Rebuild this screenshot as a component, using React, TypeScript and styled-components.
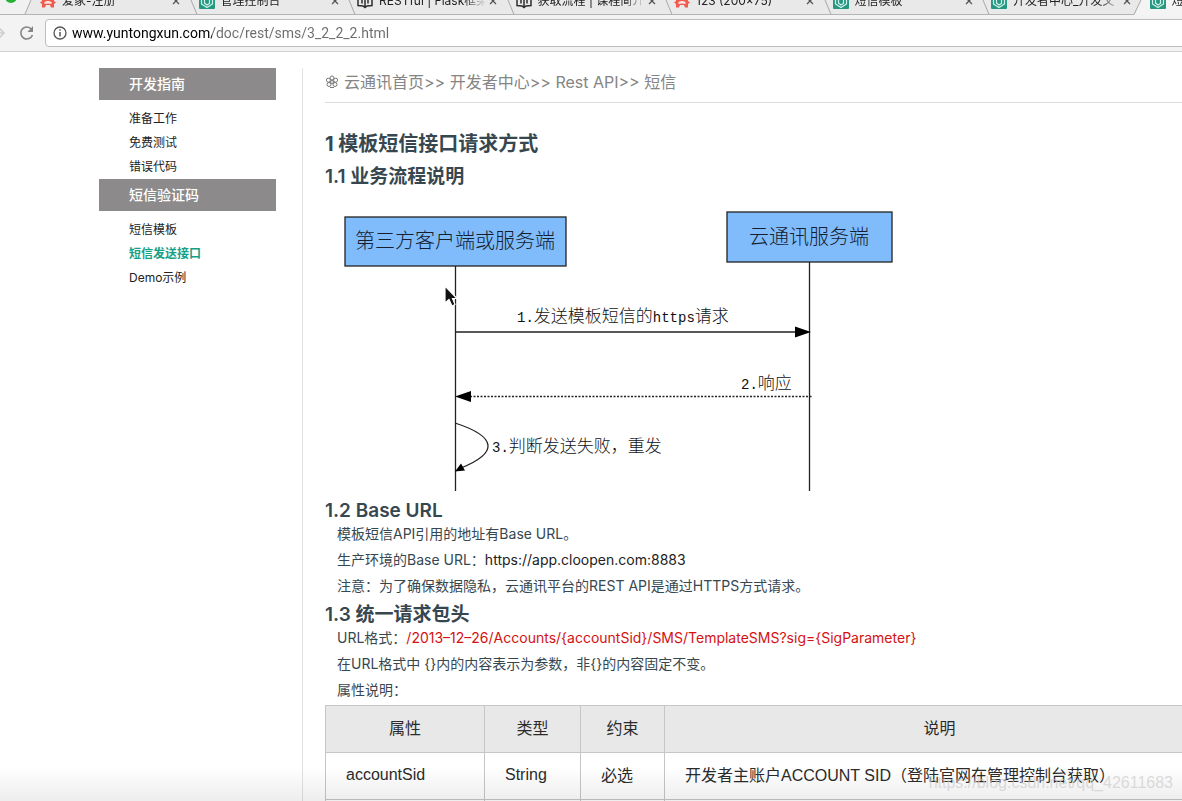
import React from "react";
import styled, { createGlobalStyle } from "styled-components";

const ui = `Inter, "Noto Sans CJK SC", sans-serif`;
const ink = "#37474f";

const GlobalStyle = createGlobalStyle`
  * { box-sizing: border-box; }
  body { margin: 0; background: #fff; font-family: ${ui}; }
  a { color: inherit; text-decoration: none; }
  h1, h2, h3, p, ul, ol { margin: 0; padding: 0; }
  ul, ol { list-style: none; }
`;

const Window = styled.div`
  position: relative;
  height: 100vh;
  overflow: hidden;
  display: flex;
  flex-direction: column;
`;

const TabStrip = styled.nav`
  display: flex;
  align-items: flex-end;
  flex: none;
  height: 15px;
  overflow: hidden;
  background: #e9e9e9;
`;

const WindowControls = styled.div`
  flex: none;
  width: 38px;
  height: 15px;
  border-bottom: 1px solid #b4b4b4;
  background: #f1f1f1;
  svg { display: block; }
`;

const TabRow = styled.div`
  flex: none;
  display: flex;
  width: 1268px;
`;

const Tab = styled.div<{ $active?: boolean }>`
  position: relative;
  flex: 1 1 0;
  min-width: 0;
  height: 27px;
  display: flex;
  align-items: center;
  padding-left: 2px;
  background: ${(p) => (p.$active ? "#f4f4f4" : "#e9e9e9")};
  border-bottom: 1px solid ${(p) => (p.$active ? "#f4f4f4" : "#b4b4b4")};
`;

const TabEdge = styled.svg`
  position: absolute;
  left: -7px;
  bottom: -1px;
`;

const Favicon = styled.svg`
  flex: none;
  width: 16px;
  height: 16px;
  margin-right: 6px;
`;

const TabTitle = styled.a`
  flex: none;
  width: 107px;
  overflow: hidden;
  white-space: nowrap;
  font-size: 12px;
  line-height: 20px;
  color: #222;
  mask-image: linear-gradient(90deg, #000 80%, transparent);
`;

const CloseButton = styled.button`
  display: flex;
  padding: 0;
  border: 0;
  margin-left: 3px;
  background: none;
`;

const Toolbar = styled.header`
  flex: none;
  display: flex;
  align-items: center;
  height: 37px;
  padding-bottom: 1px;
  background: #f3f3f3;
  border-bottom: 1px solid #d2d2d2;
`;

const ToolButton = styled.button<{ $width: number }>`
  display: flex;
  justify-content: center;
  flex: none;
  width: ${(p) => p.$width}px;
  padding: 0;
  border: 0;
  background: none;
`;

const AddressBox = styled.label`
  flex: 1;
  display: flex;
  align-items: center;
  gap: 5px;
  height: 28px;
  margin-right: -8px;
  margin-left: 4px;
  padding-left: 7px;
  background: #fff;
  border: 1px solid #bdbdbd;
  border-radius: 4px;
`;

const Address = styled.input`
  flex: 1;
  min-width: 0;
  padding: 0;
  border: 0;
  outline: 0;
  font: 14px/20px Roboto, sans-serif;
  color: transparent;
  background: linear-gradient(90deg, #000 140px, #6b6b6b 140px);
  background-clip: text;
`;

const Page = styled.div`
  flex: 1;
  min-height: 0;
  display: flex;
  align-items: stretch;
  padding: 16px 0 0 99px;
`;

const Sidebar = styled.aside`
  flex: none;
  width: 177px;
`;

const SideHeading = styled.h2`
  height: 32px;
  padding-left: 30px;
  font-size: 14px;
  font-weight: 500;
  line-height: 32px;
  color: #fff;
  background: #8c8a8a;
`;

const SideList = styled.ul`
  padding: 7px 0 0 30px;
`;

const SideItem = styled.li<{ $current?: boolean }>`
  font-size: 12px;
  line-height: 24px;
  font-weight: ${(p) => (p.$current ? 700 : 400)};
  color: ${(p) => (p.$current ? "#15a086" : "#222")};
`;

const Content = styled.main`
  flex: none;
  width: 914px;
  margin-left: 26px;
  padding-left: 22px;
  border-left: 1px solid #e2e2e2;
`;

const Breadcrumb = styled.div`
  display: flex;
  gap: 5px;
  height: 35px;
  font-size: 16px;
  line-height: 28px;
  color: #858585;
  border-bottom: 1px solid #dcdcdc;
  svg { margin-top: 7px; }
`;

const Title = styled.h1`
  margin-top: 30px;
  font-size: 20px;
  line-height: 22px;
  font-weight: 700;
  color: ${ink};
`;

const Section = styled.h2<{ $gap: number }>`
  margin-top: ${(p) => p.$gap}px;
  font-size: 19px;
  line-height: 20px;
  font-weight: 600;
  color: ${ink};
`;

const Text = styled.p`
  padding-left: 12px;
  font-size: 14px;
  line-height: 26px;
  color: ${ink};
`;

const PlainUrl = styled.a`
  color: #222;
`;

const Path = styled.span`
  color: #d41212;
`;

const Diagram = styled.svg`
  display: block;
  width: 590px;
  height: 308px;
  font-family: "Liberation Mono", "Noto Sans CJK SC", monospace;
  font-size: 17px;
  font-weight: 300;
`;

const Table = styled.table`
  width: 890px;
  margin-top: 2px;
  border-collapse: collapse;
  table-layout: fixed;
  font-family: "Liberation Sans", "Noto Sans CJK SC", sans-serif;
  font-size: 16px;
  line-height: 24px;
  color: #2b2b2b;
`;

const HeadCell = styled.th<{ $width?: number }>`
  width: ${(p) => (p.$width ? `${p.$width}px` : "auto")};
  height: 47px;
  padding: 0;
  font-weight: 400;
  background: #e8e8e8;
  border: 1px solid #c6c6c6;
`;

const Cell = styled.td<{ $latin?: boolean }>`
  height: 47px;
  padding: 0 20px ${(p) => (p.$latin ? 3 : 0)}px;
  white-space: nowrap;
  border: 1px solid #c6c6c6;
`;

const BottomShade = styled.div`
  position: absolute;
  inset: auto 0 0 0;
  height: 34px;
  background: linear-gradient(rgba(0, 0, 0, 0), rgba(0, 0, 0, 0.07));
  pointer-events: none;
`;

const Watermark = styled.div`
  position: absolute;
  right: 9px;
  bottom: 8px;
  font: 16px/20px "Liberation Sans", sans-serif;
  color: rgba(200, 200, 200, 0.65);
  pointer-events: none;
`;

const Cursor = styled.svg`
  position: absolute;
  left: 443px;
  top: 284px;
`;

type IconKind = "robot" | "leaf" | "book";

const TabIcon = ({ kind }: { kind: IconKind }) => {
  if (kind === "robot")
    return (
      <Favicon viewBox="0 0 16 16" aria-hidden>
        <path d="M2 8C2 4 4 2 8 2s6 2 6 6l2 1.500-2 1.500v3.500h-3l-1-2.500H6l-1 2.500H2V11L0 9.500Z" fill="#f05a4f" />
        <path d="M4.500 9q3.500-2 7 0v2q-3.500-1-7 0Z" fill="#fbe6e3" />
      </Favicon>
    );
  if (kind === "leaf")
    return (
      <Favicon viewBox="0 0 16 16" aria-hidden>
        <rect width="16" height="16" rx="1" fill="#249880" />
        <path d="M2.500 4v7l5.500 3.500 5.500-3.500V4M5.500 5v5L8 12l2.500-1.500V5" fill="none" stroke="#d5f2ea" strokeWidth="1.200" />
      </Favicon>
    );
  return (
    <Favicon viewBox="0 0 16 16" aria-hidden>
      <path d="M1 3v9.500l5 .5 2 1.500 2-1.500 5-.5V3l-5-.5L8 4 6 2.500ZM8 4v9.500M5 3v7.500M11 3v7.500" fill="none" stroke="#2c2c2c" strokeWidth="1.500" />
    </Favicon>
  );
};

const tabs: { icon: IconKind; title: string }[] = [
  { icon: "robot", title: "爱家-注册" },
  { icon: "leaf", title: "管理控制台" },
  { icon: "book", title: "RESTful | Flask框架" },
  { icon: "book", title: "获取流程 | 课程简介" },
  { icon: "robot", title: "123 (200×75)" },
  { icon: "leaf", title: "短信模板" },
  { icon: "leaf", title: "开发者中心_开发文" },
  { icon: "leaf", title: "短信" },
];

const menus = [
  { heading: "开发指南", items: ["准备工作", "免费测试", "错误代码"] },
  { heading: "短信验证码", items: ["短信模板", "短信发送接口", "Demo示例"] },
];

const BrowserTabs = () => (
  <TabStrip>
    <WindowControls>
      <svg width="38" height="14">
        <circle cx="11" cy="-3" r="6" fill="#27b136" />
        <path d="M25 14 31 0H39V14Z" fill="#e9e9e9" />
        <path d="M25 14 31 0" stroke="#a8a8a8" fill="none" />
      </svg>
    </WindowControls>
    <TabRow>
      {tabs.map((tab, i) => {
        const active = i === tabs.length - 1;
        return (
          <Tab key={i} $active={active}>
            {active ? (
              <TabEdge width="8" height="15" overflow="visible">
                <path d="M-7 15 0 0H8V15Z" fill="#f4f4f4" />
                <path d="M-7 14.500 0 0" stroke="#a8a8a8" />
              </TabEdge>
            ) : (
              i > 0 && (
                <TabEdge width="8" height="15">
                  <path d="M1 0 7 14.500" stroke="#a8a8a8" />
                </TabEdge>
              )
            )}
            <TabIcon kind={tab.icon} />
            <TabTitle href="#">{tab.title}</TabTitle>
            {!active && (
              <CloseButton aria-label="Close tab">
                <svg width="8" height="8">
                  <path d="m1 1 6 6m0-6-6 6" stroke="#555" strokeWidth="1.300" />
                </svg>
              </CloseButton>
            )}
          </Tab>
        );
      })}
    </TabRow>
  </TabStrip>
);

const BrowserToolbar = () => (
  <Toolbar>
    <ToolButton $width={13} aria-label="Forward">
      <svg width="13" height="16" viewBox="0 0 13 16">
        <path d="M-4 8H4M-2 2 4 8-2 14" fill="none" stroke="#d0d0d0" strokeWidth="1.600" />
      </svg>
    </ToolButton>
    <ToolButton $width={28} aria-label="Reload">
      <svg width="16" height="16" viewBox="0 0 16 16">
        <path d="M13.500 10A6 6 0 1 1 12.500 4.200" fill="none" stroke="#858585" strokeWidth="1.600" />
        <path d="M14 1v6H8.500Z" fill="#858585" />
      </svg>
    </ToolButton>
    <AddressBox>
      <svg width="14" height="14" viewBox="0 0 14 14" fill="none" stroke="#555" strokeWidth="1.300">
        <circle cx="7" cy="7" r="6" />
        <path d="M7 6v4.500M7 3.300v1.500" strokeWidth="1.500" />
      </svg>
      <Address aria-label="Address" defaultValue="www.yuntongxun.com/doc/rest/sms/3_2_2_2.html" />
    </AddressBox>
  </Toolbar>
);

const FlowDiagram = () => (
  <Diagram viewBox="325 187 590 308" role="img" aria-label="业务流程">
    <g stroke="#222" strokeWidth="1.300" fill="none">
      <path d="M455.500 266V491M809.500 262V491M455 332H797" />
      <path d="M470 396.500H812" strokeDasharray="2 1.500" />
      <path d="M455 423C498 437 498 453 461 468" />
      <rect x="345" y="217" width="221" height="49" fill="#80bcfc" />
      <rect x="727" y="212" width="165" height="50" fill="#80bcfc" />
    </g>
    <g fill="#000">
      <path d="M795 326.500 811 332 795 337.500ZM471 391 455 396.500 471 402ZM455 471.500 461 463.500 465 470.500Z" />
    </g>
    <g fill="#14202f" fontSize="20">
      <text x="355" y="248">第三方客户端或服务端</text>
      <text x="749" y="244">云通讯服务端</text>
    </g>
    <g fill="#111">
      <text x="517" y="322">
        <tspan fontSize="14">1.</tspan>发送模板短信的<tspan fontSize="14">https</tspan>请求
      </text>
      <text x="741" y="389">
        <tspan fontSize="14">2.</tspan>响应
      </text>
      <text x="492" y="452">
        <tspan fontSize="14">3.</tspan>判断发送失败，重发
      </text>
    </g>
  </Diagram>
);

export default function App() {
  return (
    <Window>
      <GlobalStyle />
      <BrowserTabs />
      <BrowserToolbar />
      <Page>
        <Sidebar>
          {menus.map((menu) => (
            <section key={menu.heading}>
              <SideHeading>{menu.heading}</SideHeading>
              <SideList>
                {menu.items.map((item) => (
                  <SideItem key={item} $current={item === "短信发送接口"}>
                    <a href="#">{item}</a>
                  </SideItem>
                ))}
              </SideList>
            </section>
          ))}
        </Sidebar>
        <Content>
          <Breadcrumb>
            <svg width="14" height="14" viewBox="0 0 14 14" fill="none" stroke="#777">
              <circle cx="7" cy="7" r="1.500" />
              <circle cx="7" cy="3" r="2" />
              <circle cx="10.600" cy="5.200" r="2" />
              <circle cx="10" cy="9.500" r="2" />
              <circle cx="4" cy="9.500" r="2" />
              <circle cx="3.400" cy="5.200" r="2" />
              <path d="M5 12.500h4" />
            </svg>
            <span>
              <a href="#">云通讯首页</a>&gt;&gt; <a href="#">开发者中心</a>&gt;&gt; <a href="#">Rest API</a>&gt;&gt;{" "}
              <a href="#">短信</a>
            </span>
          </Breadcrumb>
          <Title>1 模板短信接口请求方式</Title>
          <Section $gap={12}>1.1 业务流程说明</Section>
          <FlowDiagram />
          <Section $gap={6}>1.2 Base URL</Section>
          <Text>模板短信API引用的地址有Base URL。</Text>
          <Text>
            生产环境的Base URL：<PlainUrl href="#">https://app.cloopen.com:8883</PlainUrl>
          </Text>
          <Text>注意：为了确保数据隐私，云通讯平台的REST API是通过HTTPS方式请求。</Text>
          <Section $gap={6}>1.3 统一请求包头</Section>
          <Text>
            URL格式：<Path>/2013–12–26/Accounts/&#123;accountSid&#125;/SMS/TemplateSMS?sig=&#123;SigParameter&#125;</Path>
          </Text>
          <Text>在URL格式中 &#123;&#125;内的内容表示为参数，非&#123;&#125;的内容固定不变。</Text>
          <Text>属性说明：</Text>
          <Table>
            <thead>
              <tr>
                <HeadCell $width={159}>属性</HeadCell>
                <HeadCell $width={96}>类型</HeadCell>
                <HeadCell $width={84}>约束</HeadCell>
                <HeadCell>说明</HeadCell>
              </tr>
            </thead>
            <tbody>
              <tr>
                <Cell $latin>accountSid</Cell>
                <Cell $latin>String</Cell>
                <Cell>必选</Cell>
                <Cell>开发者主账户ACCOUNT SID（登陆官网在管理控制台获取）</Cell>
              </tr>
              <tr>
                <Cell />
                <Cell />
                <Cell />
                <Cell />
              </tr>
            </tbody>
          </Table>
        </Content>
      </Page>
      <Cursor width="16" height="24" viewBox="0 0 16 24" aria-hidden>
        <path d="M2 2V19L6 15.500 9 22 12 20.500 9.500 14.500H14Z" fill="#111" stroke="#fff" strokeWidth="1.200" />
      </Cursor>
      <BottomShade />
      <Watermark>https://blog.csdn.net/qq_42611683</Watermark>
    </Window>
  );
}
